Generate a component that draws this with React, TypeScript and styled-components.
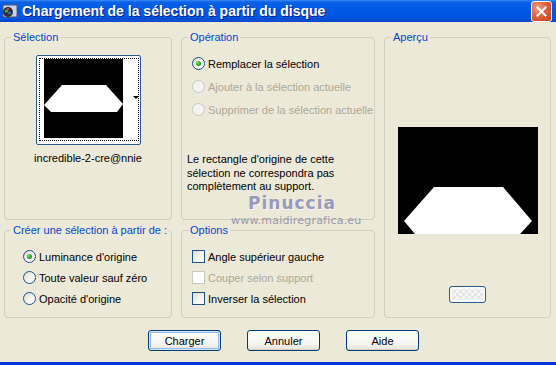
import styled, { createGlobalStyle } from "styled-components";

const GlobalStyle = createGlobalStyle`
  html, body {
    margin: 0;
    padding: 0;
    background: #ece9d8;
  }
  body {
    font-family: "Liberation Sans", Arial, sans-serif;
    font-size: 11px;
    color: #000;
  }
`;

const SWindow = styled.div`
  position: relative;
  width: 556px;
  height: 365px;
  box-sizing: border-box;
  display: flex;
  flex-direction: column;
  background: #ece9d8;
  border-bottom: 3px solid #0831d9;
  overflow: hidden;
`;

const STitleBar = styled.div`
  height: 22px;
  flex: none;
  display: flex;
  align-items: center;
  padding: 0 4px 0 2px;
  background: linear-gradient(
    #3c8cf8 0,
    #0a62e6 2px,
    #0058e6 40%,
    #0054e0 80%,
    #0046c8 100%
  );
`;

const STitle = styled.div`
  margin-left: 4px;
  font-family: "Liberation Sans", Arial, sans-serif;
  font-weight: bold;
  font-size: 14px;
  color: #fff;
  text-shadow: 1px 1px 0 #0a1e80;
  white-space: nowrap;
`;

const SClose = styled.div`
  margin-left: auto;
  width: 19px;
  height: 19px;
  border: 1px solid #fff;
  border-radius: 3px;
  background: radial-gradient(circle at 30% 30%, #f0a080 0, #e2613e 45%, #c4401c 100%);
  display: flex;
  align-items: center;
  justify-content: center;
`;

const SBody = styled.div`
  flex: 1;
  display: flex;
  flex-direction: column;
  padding: 9px 5px 0 4px;
`;

const SGrid = styled.div`
  display: grid;
  grid-template-columns: 168px 194px 167px;
  grid-template-rows: 189px 94px;
  column-gap: 9px;
  row-gap: 4px;
`;

const SGroup = styled.fieldset<{ $span?: boolean }>`
  margin: 0;
  padding: 0;
  min-width: 0;
  border: 1px solid #d0d0bf;
  border-radius: 4px;
  display: flex;
  flex-direction: column;
  grid-row: ${p => (p.$span ? "1 / span 2" : "auto")};
  grid-column: ${p => (p.$span ? "3" : "auto")};
`;

const SLegend = styled.legend`
  margin-left: 6px;
  padding: 0 2px;
  line-height: 13px;
  color: #0046d5;
`;

const SCenter = styled.div`
  display: flex;
  flex-direction: column;
  align-items: center;
`;

const SThumb = styled.div`
  margin-top: 11px;
  width: 100px;
  height: 85px;
  border: 1px solid #2c5b8c;
  border-radius: 2px;
  background: #fff;
  padding: 2px 1px 1px 2px;
  box-sizing: content-box;
`;

const SFocus = styled.div`
  height: 79px;
  border: 1px dotted #000;
  display: flex;
  padding: 0 0 2px 4px;
`;

const SStrip = styled.div`
  flex: 1;
  display: flex;
  align-items: center;
  justify-content: flex-end;
  padding-bottom: 2px;
`;

const SArrow = styled.div`
  width: 0;
  height: 0;
  border-left: 3px solid transparent;
  border-right: 3px solid transparent;
  border-top: 3px solid #000;
  margin-right: -1px;
`;

const SThumbName = styled.div`
  margin-top: 7px;
  line-height: 13px;
`;

const SOptionList = styled.div<{ $top: number; $left: number }>`
  display: flex;
  flex-direction: column;
  margin-top: ${p => p.$top}px;
  padding-left: ${p => p.$left}px;
`;

const SOptionRow = styled.label<{ $h: number; $disabled?: boolean }>`
  height: ${p => p.$h}px;
  display: flex;
  align-items: center;
  gap: 3px;
  color: ${p => (p.$disabled ? "#aca899" : "#000")};
  white-space: nowrap;
`;

const SRadio = styled.span<{ $checked?: boolean; $disabled?: boolean }>`
  width: 11px;
  height: 11px;
  flex: none;
  border-radius: 50%;
  border: 1px solid ${p => (p.$disabled ? "#cac8bb" : "#1c5180")};
  background: ${p =>
    p.$disabled
      ? "#f4f3ee"
      : "linear-gradient(135deg, #dcd9cd 0, #f4f3ee 50%, #fff 100%)"};
  display: flex;
  align-items: center;
  justify-content: center;
  &::after {
    content: "";
    display: ${p => (p.$checked ? "block" : "none")};
    width: 5px;
    height: 5px;
    border-radius: 50%;
    background: radial-gradient(circle at 35% 35%, #6ee06a 0, #21a121 60%, #0b7c0b 100%);
  }
`;

const SCheck = styled.span<{ $disabled?: boolean }>`
  width: 11px;
  height: 11px;
  flex: none;
  border: 1px solid ${p => (p.$disabled ? "#cac8bb" : "#1c5180")};
  background: ${p =>
    p.$disabled ? "#fff" : "linear-gradient(135deg, #dcdbd5 0, #f6f6f3 60%, #fff 100%)"};
`;

const SNote = styled.p`
  margin: 32px 0 0 5px;
  line-height: 13.5px;
  width: 180px;
`;

const SPreview = styled.div`
  margin: 83px auto 0;
  width: 140px;
  height: 107px;
  background: #000;
`;

const SSmallButton = styled.div`
  margin: 52px auto 0;
  width: 35px;
  height: 15px;
  border: 1px solid #2c5b8c;
  border-radius: 3px;
  background:
    repeating-conic-gradient(#f6f6f6 0 25%, #e6e6e6 0 50%) 0 0 / 6px 6px;
  box-shadow: inset 0 0 0 2px #fafafa;
`;

const SButtonRow = styled.div`
  display: flex;
  gap: 26px;
  justify-content: flex-start;
  padding: 12px 0 0 144px;
`;

const SButton = styled.button<{ $default?: boolean }>`
  width: 73px;
  height: 21px;
  padding: 0;
  font-family: "Liberation Sans", Arial, sans-serif;
  font-size: 11px;
  color: #000;
  border: 1px solid #003c74;
  border-radius: 3px;
  background: linear-gradient(#ffffff 0, #f5f4ef 70%, #e3e0d5 100%);
  box-shadow: ${p =>
    p.$default
      ? "inset 0 0 0 1px #cee7ff, inset 0 0 0 2px #98b8ea"
      : "inset 0 -1px 0 #d6d0c5"};
`;

const SWatermark = styled.div`
  position: absolute;
  left: 231px;
  top: 192px;
  width: 122px;
  text-align: center;
  color: #9a9ab8;
  pointer-events: none;
`;

const SMarkName = styled.div`
  font-family: "DejaVu Sans", sans-serif;
  font-weight: bold;
  font-size: 17px;
  line-height: 22px;
  letter-spacing: 1px;
  text-shadow: 1px 1px 0 #f4f4f8;
`;

const SMarkUrl = styled.div`
  font-family: "DejaVu Sans", sans-serif;
  font-size: 11px;
  line-height: 13px;
  letter-spacing: 0.2px;
  color: #9898aa;
  white-space: nowrap;
`;

const AppIcon = () => (
  <svg width="16" height="16" viewBox="0 0 16 16">
    <rect x="1" y="2" width="14" height="12" rx="1" fill="#c8d4e4" stroke="#4a5a70" />
    <circle cx="6" cy="9" r="5" fill="#303030" />
    <circle cx="4.5" cy="8" r="1.6" fill="#3cb44a" />
    <circle cx="7.5" cy="10" r="1.4" fill="#2f6fdc" />
    <circle cx="6" cy="6" r="1" fill="#e05050" />
  </svg>
);

const CloseGlyph = () => (
  <svg width="11" height="11" viewBox="0 0 11 11">
    <path d="M1.5 1.5 L9.5 9.5 M9.5 1.5 L1.5 9.5" stroke="#fff" strokeWidth="2" strokeLinecap="square" />
  </svg>
);

const ThumbShape = () => (
  <svg width="79" height="79" viewBox="0 0 79 79">
    <rect width="79" height="79" fill="#000" />
    <polygon points="18,26 62,26 79,45 73,53 7,53 0,46" fill="#fff" />
  </svg>
);

const PreviewShape = () => (
  <svg width="140" height="107" viewBox="0 0 140 107">
    <polygon points="36,60 105,60 134,94 122,107 17,107 6,94" fill="#fff" />
  </svg>
);

const operations = [
  { label: "Remplacer la sélection", checked: true, disabled: false },
  { label: "Ajouter à la sélection actuelle", checked: false, disabled: true },
  { label: "Supprimer de la sélection actuelle", checked: false, disabled: true },
];

const sources = [
  { label: "Luminance d'origine", checked: true },
  { label: "Toute valeur sauf zéro", checked: false },
  { label: "Opacité d'origine", checked: false },
];

const options = [
  { label: "Angle supérieur gauche", disabled: false },
  { label: "Couper selon support", disabled: true },
  { label: "Inverser la sélection", disabled: false },
];

export default function App() {
  return (
    <SWindow>
      <GlobalStyle />
      <STitleBar>
        <AppIcon />
        <STitle>Chargement de la sélection à partir du disque</STitle>
        <SClose>
          <CloseGlyph />
        </SClose>
      </STitleBar>
      <SBody>
        <SGrid>
          <SGroup>
            <SLegend>Sélection</SLegend>
            <SCenter>
              <SThumb>
                <SFocus>
                  <ThumbShape />
                  <SStrip>
                    <SArrow />
                  </SStrip>
                </SFocus>
              </SThumb>
              <SThumbName>incredible-2-cre@nnie</SThumbName>
            </SCenter>
          </SGroup>
          <SGroup>
            <SLegend>Opération</SLegend>
            <SOptionList $top={8} $left={10}>
              {operations.map(op => (
                <SOptionRow key={op.label} $h={23} $disabled={op.disabled}>
                  <SRadio $checked={op.checked} $disabled={op.disabled} />
                  {op.label}
                </SOptionRow>
              ))}
            </SOptionList>
            <SNote>
              Le rectangle d'origine de cette sélection ne correspondra pas
              complètement au support.
            </SNote>
          </SGroup>
          <SGroup $span>
            <SLegend>Aperçu</SLegend>
            <SPreview>
              <PreviewShape />
            </SPreview>
            <SSmallButton />
          </SGroup>
          <SGroup>
            <SLegend>Créer une sélection à partir de :</SLegend>
            <SOptionList $top={9} $left={18}>
              {sources.map(s => (
                <SOptionRow key={s.label} $h={21}>
                  <SRadio $checked={s.checked} />
                  {s.label}
                </SOptionRow>
              ))}
            </SOptionList>
          </SGroup>
          <SGroup>
            <SLegend>Options</SLegend>
            <SOptionList $top={9} $left={10}>
              {options.map(o => (
                <SOptionRow key={o.label} $h={21} $disabled={o.disabled}>
                  <SCheck $disabled={o.disabled} />
                  {o.label}
                </SOptionRow>
              ))}
            </SOptionList>
          </SGroup>
        </SGrid>
        <SButtonRow>
          <SButton $default>Charger</SButton>
          <SButton>Annuler</SButton>
          <SButton>Aide</SButton>
        </SButtonRow>
      </SBody>
      <SWatermark>
        <SMarkName>Pinuccia</SMarkName>
        <SMarkUrl>www.maidiregrafica.eu</SMarkUrl>
      </SWatermark>
    </SWindow>
  );
}
